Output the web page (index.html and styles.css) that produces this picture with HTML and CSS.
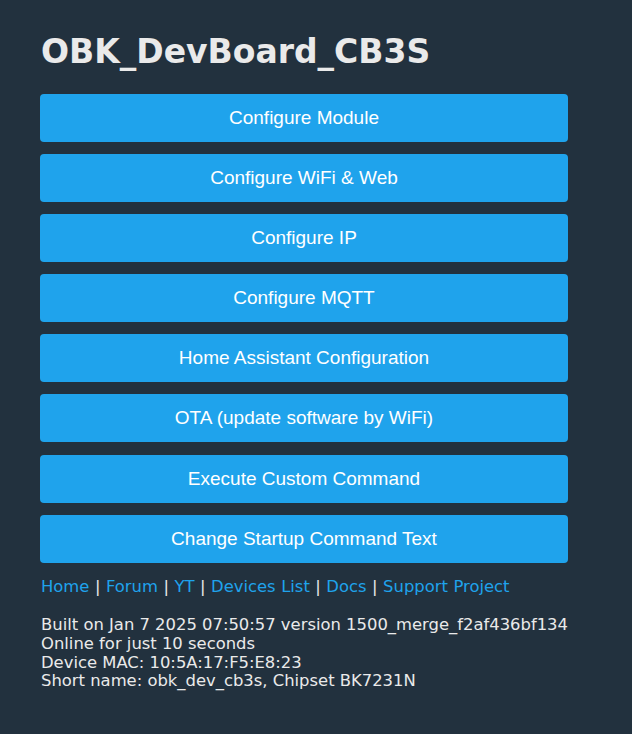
FILE: index.html
```html
<!DOCTYPE html>
<html>
<head>
<meta charset="utf-8">
<link rel="stylesheet" href="styles.css">
</head>
<body>
<div class="page">
  <h1 class="title">OBK_DevBoard_CB3S</h1>
  <div class="buttons">
    <button class="btn">Configure Module</button>
    <button class="btn">Configure WiFi &amp; Web</button>
    <button class="btn">Configure IP</button>
    <button class="btn">Configure MQTT</button>
    <button class="btn">Home Assistant Configuration</button>
    <button class="btn">OTA (update software by WiFi)</button>
    <button class="btn">Execute Custom Command</button>
    <button class="btn">Change Startup Command Text</button>
  </div>
  <div class="links">
    <a href="#">Home</a> | <a href="#">Forum</a> | <a href="#">YT</a> | <a href="#">Devices List</a> | <a href="#">Docs</a> | <a href="#">Support Project</a>
  </div>
  <div class="info">
    <div>Built on Jan 7 2025 07:50:57 version 1500_merge_f2af436bf134</div>
    <div>Online for just 10 seconds</div>
    <div>Device MAC: 10:5A:17:F5:E8:23</div>
    <div>Short name: obk_dev_cb3s, Chipset BK7231N</div>
  </div>
</div>
</body>
</html>
```

FILE: styles.css
```css
html, body {
  margin: 0;
  padding: 0;
  background: #22313e;
}
body {
  font-family: "DejaVu Sans", Verdana, sans-serif;
  font-size: 16.4px;
  line-height: 18.7px;
  color: #eaeaea;
}
.page {
  width: 528px;
  margin-left: 40px;
  padding-top: 33px;
}
.title {
  font-size: 33px;
  line-height: 38px;
  font-weight: bold;
  margin: 0 0 23px 1px;
  color: #eaeaea;
}
.buttons {
  display: flex;
  flex-direction: column;
  gap: 12.1px;
}
.btn {
  display: block;
  width: 100%;
  height: 48px;
  border: 0;
  border-radius: 4px;
  background: #1fa3ec;
  color: #fff;
  font-family: "Liberation Sans", Arial, sans-serif;
  font-size: 19px;
  padding: 0;
}
.links {
  margin-top: 15px;
  margin-left: 1px;
  word-spacing: 0.3px;
}
.links a {
  color: #1fa3ec;
  text-decoration: none;
}
.info {
  margin-top: 20px;
  margin-left: 1px;
}
```
